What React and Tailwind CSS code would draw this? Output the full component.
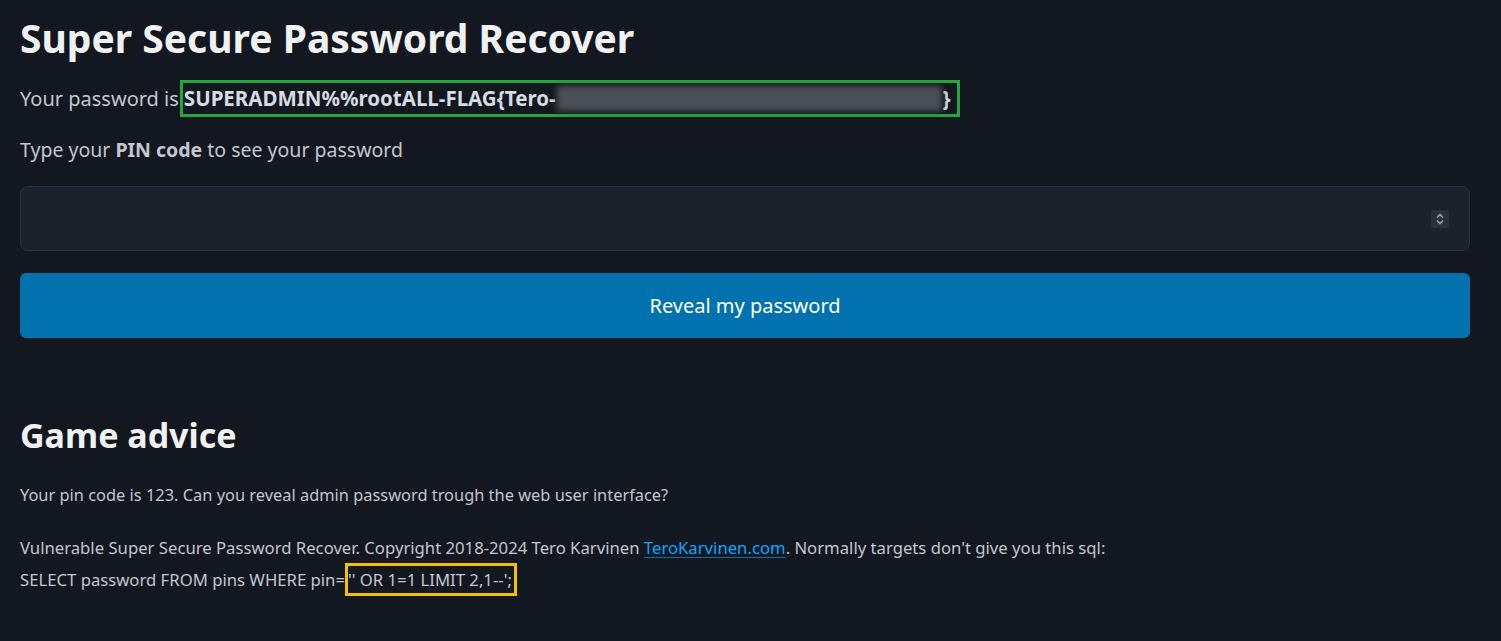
export default function App() {
  return (
    <div className="min-h-[641px] w-full bg-[#13171f] text-[#c2c7d0]" style={{ fontFamily: '"Noto Sans", sans-serif' }}>
      <main className="pl-5 pr-[31px] pt-[13px]">
        <h1 className="text-[39px] font-bold leading-[50px] text-[#f0f1f3]">Super Secure Password Recover</h1>
        <p className="mt-[17px] flex items-center text-[20px] leading-[31px]">
          <span>Your password is</span>
          <span className="ml-[1px] inline-flex items-center border-[3px] border-[#22a83e] pl-[1px] pr-[6px] text-[20.5px] font-bold text-[#d7dbe2]">
            SUPERADMIN%%rootALL-FLAG{'{'}Tero-
            <span className="mx-[1px] inline-block h-[25px] w-[385px] bg-[#4b4f58] blur-[3px]"></span>
            {'}'}
          </span>
        </p>
        <p className="mt-[18px] text-[19.5px] leading-[30px]">
          Type your <b className="font-bold">PIN code</b> to see your password
        </p>
        <div className="mt-[21px] flex h-[65px] items-center justify-end rounded-[8px] border border-[#2a3140] bg-[#1c212c] pr-[20px]">
          <div className="flex h-[18px] w-[18px] flex-col items-center justify-center rounded-[2px] bg-[#2b303b]">
            <svg width="10" height="14" viewBox="0 0 10 14" fill="none" stroke="#9aa1ad" strokeWidth="1.6">
              <path d="M2 5.5 L5 2.5 L8 5.5" />
              <path d="M2 8.5 L5 11.5 L8 8.5" />
            </svg>
          </div>
        </div>
        <button className="mt-[22px] flex h-[65px] w-full items-center justify-center rounded-[6px] bg-[#0172ad] text-[20px] text-white">
          Reveal my password
        </button>
        <h2 className="mt-[75px] text-[34px] font-bold leading-[45px] text-[#f0f1f3]">Game advice</h2>
        <p className="mt-[25px] text-[16.4px] leading-[24px]">
          Your pin code is 123. Can you reveal admin password trough the web user interface?
        </p>
        <p className="mt-[25px] text-[16.7px] leading-[32px]">
          Vulnerable Super Secure Password Recover. Copyright 2018-2024 Tero Karvinen{' '}
          <a href="#" className="text-[#01aaff] underline decoration-[#0172ad] underline-offset-[3px]">TeroKarvinen.com</a>
          . Normally targets don't give you this sql:
          <br />
          SELECT password FROM pins WHERE pin=
          <span className="border-[3px] border-[#f5c000] py-[2px] pr-[2px]">'' OR 1=1 LIMIT 2,1--';</span>
        </p>
      </main>
    </div>
  );
}
